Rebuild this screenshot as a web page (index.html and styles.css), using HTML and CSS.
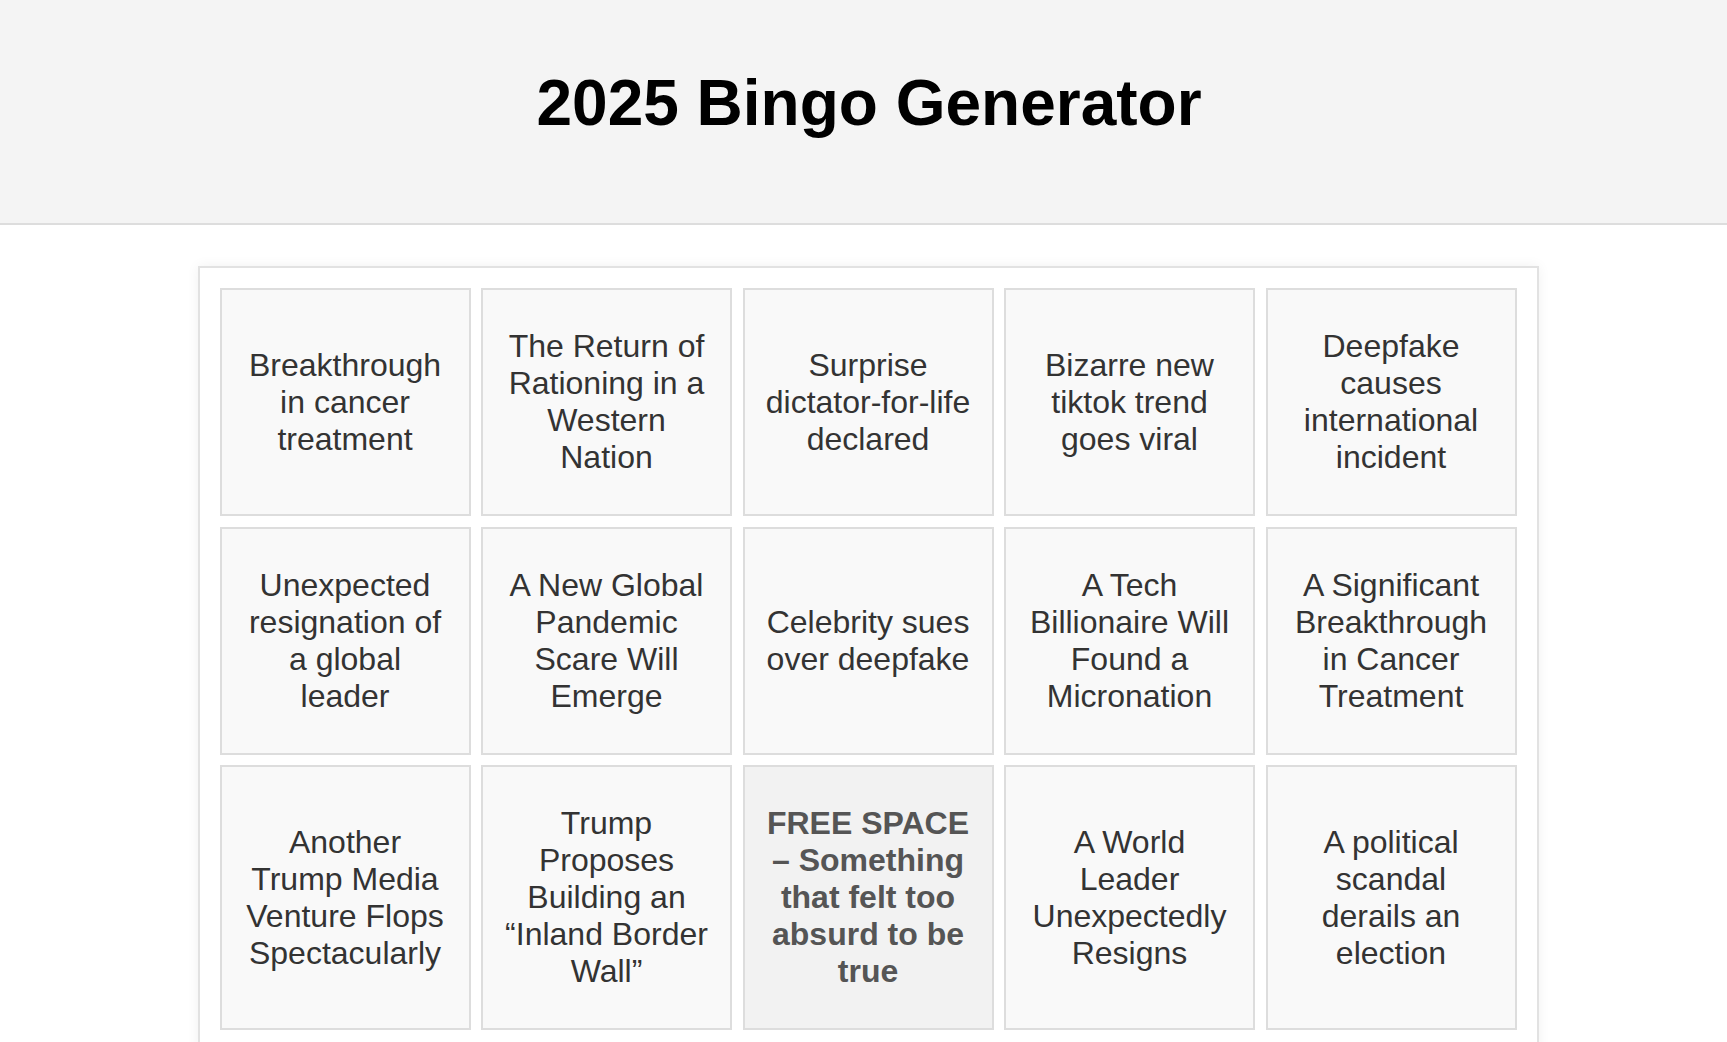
FILE: index.html
```html
<!DOCTYPE html>
<html lang="en">
<head>
<meta charset="utf-8">
<title>2025 Bingo Generator</title>
<link rel="stylesheet" href="styles.css">
</head>
<body>
<header class="site-header">
  <h1 class="title">2025 Bingo Generator</h1>
</header>
<main class="main">
  <section class="card">
    <div class="grid">
      <div class="cell">Breakthrough in cancer treatment</div>
      <div class="cell">The Return of Rationing in a Western Nation</div>
      <div class="cell">Surprise dictator-for-life declared</div>
      <div class="cell">Bizarre new tiktok trend goes viral</div>
      <div class="cell">Deepfake causes international incident</div>
      <div class="cell">Unexpected resignation of a global leader</div>
      <div class="cell">A New Global Pandemic Scare Will Emerge</div>
      <div class="cell">Celebrity sues over deepfake</div>
      <div class="cell">A Tech Billionaire Will Found a Micronation</div>
      <div class="cell">A Significant Breakthrough in Cancer Treatment</div>
      <div class="cell">Another Trump Media Venture Flops Spectacularly</div>
      <div class="cell">Trump Proposes Building an “Inland Border Wall”</div>
      <div class="cell free">FREE SPACE – Something that felt too absurd to be true</div>
      <div class="cell">A World Leader Unexpectedly Resigns</div>
      <div class="cell">A political scandal derails an election</div>
    </div>
  </section>
</main>
</body>
</html>
```
FILE: styles.css
```css
html, body {
  margin: 0;
  padding: 0;
  background: #ffffff;
  font-family: "Liberation Sans", Arial, sans-serif;
  color: #333333;
}

.site-header {
  background: #f4f4f4;
  border-bottom: 2px solid #dddddd;
  padding: 66px 0 83px 11px;
  text-align: center;
}

.title {
  margin: 0;
  font-size: 64px;
  font-weight: bold;
  line-height: normal;
  color: #000000;
}

.main {
  padding: 41px 0 40px 9px;
}

.card {
  box-sizing: border-box;
  width: 1341px;
  margin: 0 auto;
  background: #ffffff;
  border: 2px solid #e2e2e2;
  padding: 20px;
  box-shadow: 0 0 12px rgba(0, 0, 0, 0.06);
}

.grid {
  display: grid;
  grid-template-columns: repeat(5, 1fr);
  gap: 10.5px;
}

.cell {
  display: flex;
  align-items: center;
  justify-content: center;
  text-align: center;
  background: #f9f9f9;
  border: 2px solid #dddddd;
  padding: 38px 20px;
  font-size: 32px;
  line-height: normal;
  color: #333333;
}

.cell.free {
  background: #f2f2f2;
  font-weight: bold;
  color: #555555;
}
```
